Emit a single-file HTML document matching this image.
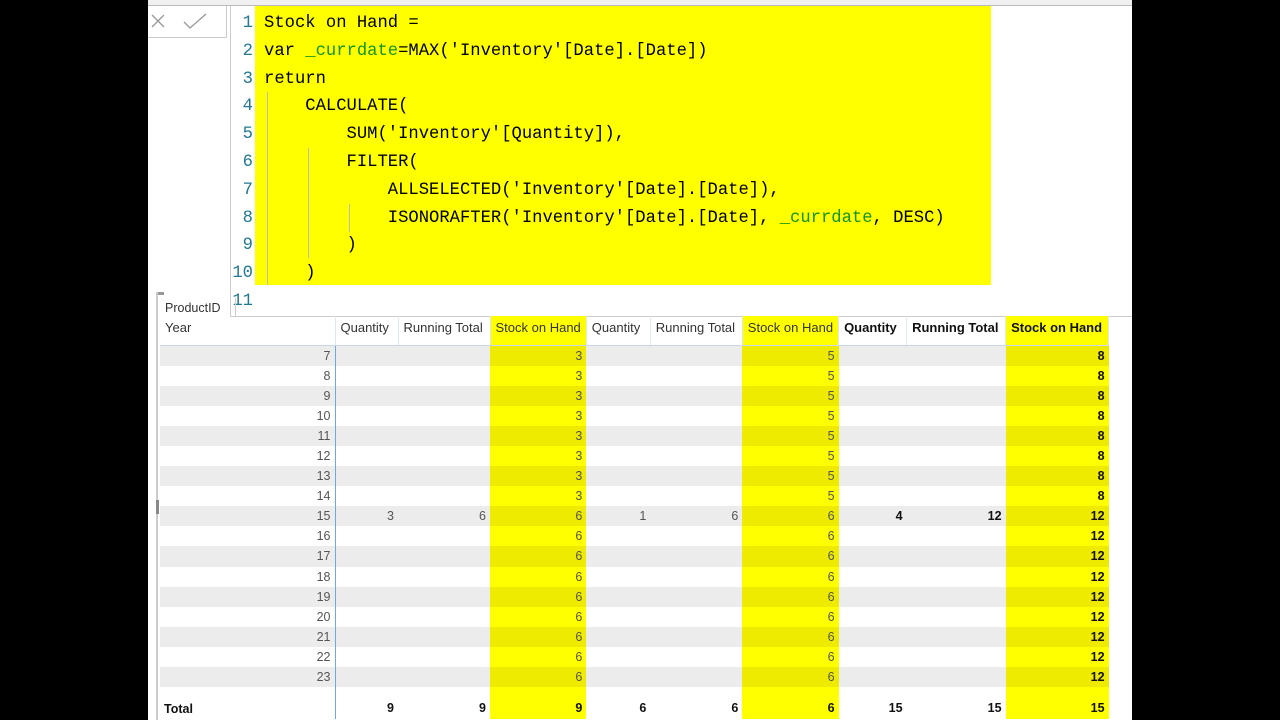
<!DOCTYPE html>
<html><head><style>
body{margin:0;width:1280px;height:720px;background:#000;position:relative;overflow:hidden;font-family:"Liberation Sans",sans-serif}
#w{position:absolute;left:148px;top:0;width:984px;height:720px;background:#fff;overflow:hidden}
.topbar{position:absolute;left:0;top:0;width:984px;height:5px;background:#f0f0f0;border-bottom:1px solid #bbb}
.xbox{position:absolute;left:0;top:6px;width:78px;height:31px;border-right:1px solid #ccc;border-bottom:1px solid #ccc}
.ed{position:absolute;left:82px;top:6px;width:902px;height:310px;border-left:1px solid #ccc;border-bottom:1px solid #ccc}
.hl{position:absolute;left:24px;top:0;width:736px;height:279px;background:#ffff00}
.code{position:absolute;left:0;top:4px;font-family:"Liberation Mono",monospace;font-size:17.2px;line-height:27.8px;white-space:pre;color:#000}
.ln{position:absolute;left:0;width:22px;text-align:right;color:#237893}
.g{color:#10941a}
.guide{position:absolute;width:1px;background:#bbb}
table{position:absolute;left:12px;top:316px;border-collapse:collapse;table-layout:fixed;font-size:12.5px;color:#555}
td{height:20.1px;padding:0 4px;text-align:right;white-space:nowrap;overflow:hidden;line-height:20px}
th{height:29px;font-weight:normal;text-align:left;padding:0 5px;color:#333;border-bottom:1px solid #c8d8e8;border-right:1px solid #dde8f0;white-space:nowrap;overflow:hidden;font-size:13px;vertical-align:top;padding-top:4px;box-sizing:border-box}
tr.o td{background:#edeced}
td.y{background:#ffff00}
tr.o td.y{background:#eeeb00}
td.b{color:#111;font-weight:bold}
th.b{font-weight:bold;color:#111}
th.y{background:#ffff00}
table td.f{border-right:1px solid #6aaae8}
</style></head><body>
<div id="w">
<div class="topbar"></div>
<div class="xbox"><svg width="78" height="31"><path d="M4 9 L16 21 M16 9 L4 21" stroke="#999" stroke-width="1.3"/><path d="M36 16 L42 22 L58 8" stroke="#999" stroke-width="1.3" fill="none"/></svg></div>
<div class="ed">
<div class="hl"></div>
<div class="guide" style="left:36px;top:86px;height:193px"></div>
<div class="guide" style="left:77px;top:142px;height:110px"></div>
<div class="guide" style="left:118px;top:198px;height:28px"></div>
<div class="code" style="left:0"><div class="ln" style="top:0">1
2
3
4
5
6
7
8
9
10
11</div></div>
<div class="code" style="left:33px">Stock on Hand =
var <span class="g">_currdate</span>=MAX('Inventory'[Date].[Date])
return
    CALCULATE(
        SUM('Inventory'[Quantity]),
        FILTER(
            ALLSELECTED('Inventory'[Date].[Date]),
            ISONORAFTER('Inventory'[Date].[Date], <span class="g">_currdate</span>, DESC)
        )
    )
</div>
</div>
<div style="position:absolute;left:8px;top:292px;width:8px;height:3px;background:#999"></div>
<div style="position:absolute;left:8px;top:292px;width:2px;height:428px;background:#ccc"></div>
<div style="position:absolute;left:8px;top:500px;width:3px;height:14px;background:#888"></div>
<div style="position:absolute;left:12px;top:298px;width:70px;height:18px;border-right:1px solid #ccc;font-size:12.5px;color:#333;padding-left:5px;line-height:20px">ProductID</div>
<table>
<colgroup><col style="width:175px"><col style="width:63px"><col style="width:92px"><col style="width:96px"><col style="width:64px"><col style="width:92px"><col style="width:96px"><col style="width:68px"><col style="width:99px"><col style="width:103px"></colgroup>
<tr><th>Year</th><th>Quantity</th><th>Running Total</th><th class="y">Stock on Hand</th><th>Quantity</th><th>Running Total</th><th class="y">Stock on Hand</th><th class="b">Quantity</th><th class="b">Running Total</th><th class="y b">Stock on Hand</th></tr>
<tr class="o"><td class="f">7</td><td></td><td></td><td class="y">3</td><td></td><td></td><td class="y">5</td><td></td><td></td><td class="y b">8</td></tr>
<tr><td class="f">8</td><td></td><td></td><td class="y">3</td><td></td><td></td><td class="y">5</td><td></td><td></td><td class="y b">8</td></tr>
<tr class="o"><td class="f">9</td><td></td><td></td><td class="y">3</td><td></td><td></td><td class="y">5</td><td></td><td></td><td class="y b">8</td></tr>
<tr><td class="f">10</td><td></td><td></td><td class="y">3</td><td></td><td></td><td class="y">5</td><td></td><td></td><td class="y b">8</td></tr>
<tr class="o"><td class="f">11</td><td></td><td></td><td class="y">3</td><td></td><td></td><td class="y">5</td><td></td><td></td><td class="y b">8</td></tr>
<tr><td class="f">12</td><td></td><td></td><td class="y">3</td><td></td><td></td><td class="y">5</td><td></td><td></td><td class="y b">8</td></tr>
<tr class="o"><td class="f">13</td><td></td><td></td><td class="y">3</td><td></td><td></td><td class="y">5</td><td></td><td></td><td class="y b">8</td></tr>
<tr><td class="f">14</td><td></td><td></td><td class="y">3</td><td></td><td></td><td class="y">5</td><td></td><td></td><td class="y b">8</td></tr>
<tr class="o"><td class="f">15</td><td>3</td><td>6</td><td class="y">6</td><td>1</td><td>6</td><td class="y">6</td><td class="b">4</td><td class="b">12</td><td class="y b">12</td></tr>
<tr><td class="f">16</td><td></td><td></td><td class="y">6</td><td></td><td></td><td class="y">6</td><td></td><td></td><td class="y b">12</td></tr>
<tr class="o"><td class="f">17</td><td></td><td></td><td class="y">6</td><td></td><td></td><td class="y">6</td><td></td><td></td><td class="y b">12</td></tr>
<tr><td class="f">18</td><td></td><td></td><td class="y">6</td><td></td><td></td><td class="y">6</td><td></td><td></td><td class="y b">12</td></tr>
<tr class="o"><td class="f">19</td><td></td><td></td><td class="y">6</td><td></td><td></td><td class="y">6</td><td></td><td></td><td class="y b">12</td></tr>
<tr><td class="f">20</td><td></td><td></td><td class="y">6</td><td></td><td></td><td class="y">6</td><td></td><td></td><td class="y b">12</td></tr>
<tr class="o"><td class="f">21</td><td></td><td></td><td class="y">6</td><td></td><td></td><td class="y">6</td><td></td><td></td><td class="y b">12</td></tr>
<tr><td class="f">22</td><td></td><td></td><td class="y">6</td><td></td><td></td><td class="y">6</td><td></td><td></td><td class="y b">12</td></tr>
<tr class="o"><td class="f">23</td><td></td><td></td><td class="y">6</td><td></td><td></td><td class="y">6</td><td></td><td></td><td class="y b">12</td></tr>
<tr><td class="f" style="height:10px"></td><td style="height:10px"></td><td style="height:10px"></td><td class="y" style="height:10px"></td><td style="height:10px"></td><td style="height:10px"></td><td class="y" style="height:10px"></td><td style="height:10px"></td><td style="height:10px"></td><td class="y" style="height:10px"></td></tr>
<tr><td class="f b" style="text-align:left;padding-top:2px">Total</td><td class="b">9</td><td class="b">9</td><td class="y b">9</td><td class="b">6</td><td class="b">6</td><td class="y b">6</td><td class="b">15</td><td class="b">15</td><td class="y b">15</td></tr>
</table>
</div>
</body></html>
